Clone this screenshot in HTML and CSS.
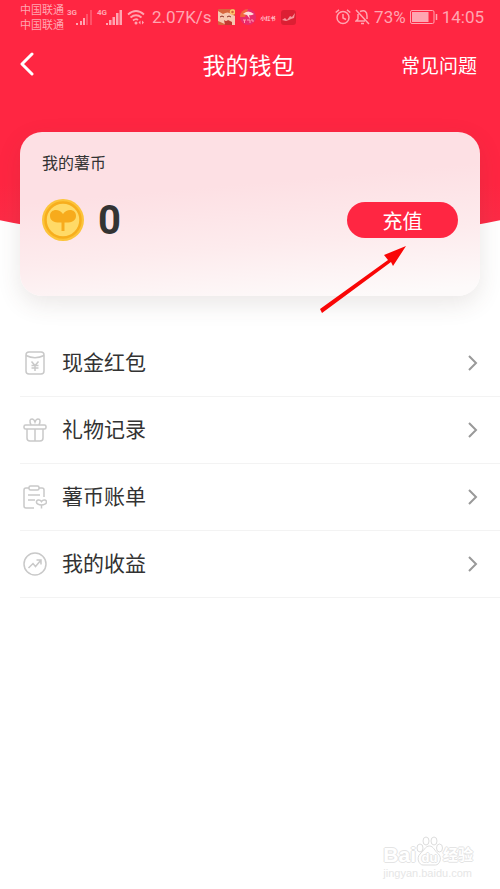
FILE: index.html
```html
<!DOCTYPE html>
<html lang="zh-CN">
<head>
<meta charset="utf-8">
<meta name="viewport" content="width=device-width, initial-scale=1">
<title>我的钱包</title>
<link rel="stylesheet" href="styles.css">
</head>
<body>
<div class="page">
  <header class="hero">
    <div class="status">
      <div class="carriers"><span>中国联通</span><span>中国联通</span></div>
      <div class="signal">
        <span class="net">3G</span>
        <svg width="16" height="16" viewBox="0 0 16 16" fill="currentColor">
          <path d="M0 14h2v2H0zM4 12h2v4H4zM7 9h2v7H7z"/>
          <path opacity=".35" d="M10 5h2v11h-2zM14 1h2v15h-2z"/>
        </svg>
      </div>
      <div class="signal">
        <span class="net">4G</span>
        <svg width="16" height="16" viewBox="0 0 16 16" fill="currentColor">
          <path d="M0 14h2v2H0zM3 11h2.500v5H3zM6.500 8H9v8H6.500zM10 4h2.500v12H10zM13.500 1H16v15h-2.500z"/>
        </svg>
      </div>
      <svg width="18" height="16" viewBox="0 0 18 16" fill="none" stroke="currentColor" stroke-width="1.800">
        <path d="M1 5.500Q9-1.500 17 5.500M3.500 8.500Q9 4 14.500 8.500M6 11.500Q9 9 11 11"/>
        <circle cx="9" cy="14" r="1.500" fill="currentColor" stroke="none"/>
        <path d="M13.500 11.500l-2 2 2 2zM15 11.500l2 2-2 2z" fill="currentColor" stroke="none"/>
      </svg>
      <span class="speed">2.07K/s</span>
      <div class="apps">
        <svg width="17" height="16" viewBox="0 0 17 16">
          <rect width="17" height="16" rx="1" fill="#d7653c"/>
          <path d="M0 2l5 3q5-3 8 0l4 2v9H9L0 12z" fill="#f7c8b0"/>
          <path d="M2 8q2-2 4 0M9 8q2-2 4 0" stroke="#8c3028" fill="none"/>
          <path d="M6 11q2 2 4 0l4 2v3H7z" fill="#c23a32"/>
          <circle cx="14.500" cy="3" r="2" fill="none" stroke="#ffc66e" stroke-width="1.500"/>
        </svg>
        <svg width="16" height="16" viewBox="0 0 16 16">
          <circle cx="8" cy="8" r="8" fill="#e92b6c"/>
          <path d="M0 8A8 8 0 0 1 8 0L5 8z" fill="#f1663c"/>
          <path d="M3 5q5-5 11 0-3 2-5 1l1 4-3-4z" fill="#ffdcd8"/>
          <path d="M3 11h3M4.500 11v3M7 11h3v3M11 11h2v2" stroke="#ff9fae" fill="none"/>
        </svg>
        <span class="redbook">小红书</span>
        <svg width="15" height="15" viewBox="0 0 15 15">
          <rect width="15" height="15" rx="3" fill="#dc1f33"/>
          <path d="M1 10l3-2 2 2 3-4 2 1 3-4-1 5-3 1-2 1-3 1z" fill="#f5959c"/>
        </svg>
      </div>
      <div class="device">
        <svg width="16" height="16" viewBox="0 0 16 16" fill="none" stroke="currentColor" stroke-width="1.500">
          <circle cx="8" cy="8.500" r="6"/><path d="M8 5v4l3 1.500M.700 3.500L4 .800M15.300 3.500L12 .800"/>
        </svg>
        <svg width="15" height="16" viewBox="0 0 15 16" fill="none" stroke="currentColor" stroke-width="1.500">
          <path d="M1 1l13 14M3 5v5l-2 2h9M5 2.500Q12 0 12 7v3M6 14.500h3"/>
        </svg>
        <span>73%</span>
        <svg width="28" height="14" viewBox="0 0 28 14" fill="none" stroke="currentColor">
          <rect x=".5" y=".5" width="23.500" height="13" rx="1.500"/>
          <rect x="2" y="2" width="16.500" height="10" fill="currentColor" stroke="none"/>
          <path d="M26.500 4v6" stroke-width="1.500"/>
        </svg>
        <span>14:05</span>
      </div>
    </div>
    <nav class="bar">
      <button class="back" aria-label="返回">
        <svg width="14" height="24" viewBox="0 0 14 24" fill="none" stroke="#fff" stroke-width="3" stroke-linecap="round" stroke-linejoin="round"><path d="M12 2L2 12l10 10"/></svg>
      </button>
      <h1>我的钱包</h1>
      <a class="faq" href="#faq">常见问题</a>
    </nav>
  </header>

  <main>
    <section class="card">
      <h2>我的薯币</h2>
      <div class="balance">
        <svg width="42" height="42" viewBox="0 0 42 42">
          <circle cx="21" cy="21" r="21" fill="#fcc43a"/>
          <circle cx="21" cy="21" r="17.500" fill="#ffda67" stroke="#f7ae1d" stroke-width="2.500"/>
          <path d="M21 15C17 9 8 10 8 17c0 5 5 7 11.500 6.500V32h3v-8.500C29 24 34 22 34 17c0-7-9-8-13-2z" fill="#f7ab1c"/>
        </svg>
        <strong>0</strong>
        <button class="topup">充值</button>
      </div>
      <svg class="pointer" width="88" height="68" viewBox="0 0 88 68" fill="#f90606">
        <path d="M2 67L0 63 68 14 64 9 86 0 73 20 71 16z"/>
      </svg>
    </section>

    <ul class="menu">
      <li><a href="#cash">
        <svg class="icon" viewBox="0 0 24 24"><rect x="3" y="1" width="18" height="22" rx="3"/><path d="M3 4.500Q12 9 21 4.500M8.500 10.500l3.500 4 3.500-4M12 14.500V20M8.500 14.500h7M8.500 17h7"/></svg>
        <span>现金红包</span>
        <svg class="chevron" viewBox="0 0 10 16"><path d="M1 1l7 7-7 7"/></svg>
      </a></li>
      <li><a href="#gifts">
        <svg class="icon" viewBox="0 0 24 24"><rect x="1" y="7" width="22" height="4" rx="1.500"/><path d="M4 11v9q0 3 3 3h10q3 0 3-3v-9M12 11v12M8 7Q5.500 1 9 1q2 0 3 3 1-3 3-3 3.500 0 1 6"/></svg>
        <span>礼物记录</span>
        <svg class="chevron" viewBox="0 0 10 16"><path d="M1 1l7 7-7 7"/></svg>
      </a></li>
      <li><a href="#bill">
        <svg class="icon" viewBox="0 0 24 24"><path d="M6 3H3Q1 3 1 5v16q0 2 2 2h8M16 3h3q2 0 2 2v7M5 10h12M5 15h7"/><rect x="6" y="1" width="10" height="4" rx="1.500"/><path d="M18.500 16.500C17 14 13 14.500 13.500 17.500q.5 2 5 2.500q4.500-.5 5-2.500c.5-3-3.500-3.500-5-1zM18.500 20v3.500"/></svg>
        <span>薯币账单</span>
        <svg class="chevron" viewBox="0 0 10 16"><path d="M1 1l7 7-7 7"/></svg>
      </a></li>
      <li><a href="#income">
        <svg class="icon" viewBox="0 0 24 24"><circle cx="12" cy="12" r="11"/><path d="M5.500 16l4.500-4.500 2.500 3L18 8M13.500 8H18v4.500"/></svg>
        <span>我的收益</span>
        <svg class="chevron" viewBox="0 0 10 16"><path d="M1 1l7 7-7 7"/></svg>
      </a></li>
    </ul>
  </main>

  <footer class="mark">
    <div class="brand">
      <span>Bai</span>
      <span class="paw">
        <svg width="27" height="30" viewBox="0 0 27 30" fill="#fff" stroke="#ddd">
          <ellipse cx="4" cy="12" rx="3" ry="4"/><ellipse cx="10" cy="5" rx="3" ry="4"/><ellipse cx="18" cy="5" rx="3" ry="4"/><ellipse cx="23.500" cy="12" rx="3" ry="4"/>
          <path d="M13.500 10c4 0 5 5 9 8 4 4 1 11-3 11H7c-4 0-7-7-3-11 4-3 5-8 9.500-8z"/>
        </svg>
        <span class="du">du</span>
      </span>
      <span class="exp">经验</span>
    </div>
    <div class="site">jingyan.baidu.com</div>
  </footer>
</div>
</body>
</html>
```
FILE: styles.css
```css
* { box-sizing: border-box; }

body {
  margin: 0;
  background: #fff;
  color: #333;
  font-family: Roboto, "Noto Sans CJK SC", sans-serif;
}

.page {
  position: relative;
  min-height: 100vh;
}

svg { display: block; flex: none; }
h1, h2, ul { margin: 0; padding: 0; font-weight: 400; }
a { color: inherit; text-decoration: none; }
button { border: 0; padding: 0; font: inherit; cursor: pointer; }

.hero {
  height: 245px;
  background: linear-gradient(#ff2642 75%, #fb2f49);
  clip-path: ellipse(114% 100% at 50% 0);
  color: #fff;
}

.status {
  display: flex;
  align-items: center;
  height: 34px;
  padding: 0 16px 0 20px;
  color: #ffa5b1;
  font-size: 17px;
}

.carriers {
  display: flex;
  flex-direction: column;
  margin-right: 3px;
  padding-top: 2px;
  font-size: 11px;
  line-height: 15px;
}

.signal {
  display: flex;
  align-items: center;
  margin-right: 5px;
}

.net {
  align-self: flex-start;
  width: 9px;
  font-size: 8px;
  font-weight: 700;
  line-height: 8px;
}

.speed { margin-left: 7px; }

.apps {
  display: flex;
  align-items: center;
  gap: 5px;
  margin-left: 6px;
}

.redbook { color: #ffd0d6; font-size: 5px; font-weight: 700; }

.device {
  display: flex;
  align-items: center;
  gap: 4px;
  margin-left: auto;
}

.bar {
  display: grid;
  grid-template-columns: 1fr auto 1fr;
  align-items: center;
  height: 60px;
  padding: 0 23px 0 20px;
}

.back { justify-self: start; background: none; }
.bar h1 { font-size: 23px; }
.faq { justify-self: end; font-size: 19px; }

.card {
  position: relative;
  height: 164px;
  margin: -113px 20px 34px;
  padding: 20px 22px;
  border-radius: 22px;
  background: linear-gradient(175deg, #fdfafa 5%, #fdebed 35%, #fde0e4 65%);
  background: linear-gradient(175deg, #fde0e4 35%, #fdebed 65%, #fdfafa 95%);
  box-shadow: 0 8px 24px rgba(80, 60, 50, .12);
}

.card h2 { font-size: 16px; line-height: 24px; }

.balance {
  display: flex;
  align-items: center;
  gap: 14px;
  margin-top: 22px;
}

.balance strong { padding-top: 2px; font-size: 40px; line-height: 42px; }

.topup {
  width: 111px;
  height: 36px;
  margin-left: auto;
  border-radius: 18px;
  background: #ff2642;
  color: #fff;
  font-size: 20px;
}

.pointer {
  position: absolute;
  right: 72px;
  bottom: -18px;
}

.menu { list-style: none; }

.menu li {
  margin-left: 20px;
  border-bottom: 1px solid #f3f3f3;
}

.menu a {
  display: flex;
  align-items: center;
  height: 66px;
  padding: 0 22px 0 3px;
  font-size: 21px;
  line-height: 28px;
}

.icon {
  width: 24px;
  height: 24px;
  margin-right: 15px;
  fill: none;
  stroke: #c9c9c9;
  stroke-width: 1.5;
}

.chevron {
  width: 10px;
  height: 16px;
  margin-left: auto;
  fill: none;
  stroke: #999;
  stroke-width: 2;
}

.mark {
  position: absolute;
  right: 27px;
  bottom: 8px;
  color: #fff;
  font-family: "Liberation Sans", "Noto Sans CJK SC", sans-serif;
  text-shadow: 1px 0 #e4e4e4, -1px 0 #e4e4e4, 0 1px #e4e4e4, 0 -1px #e4e4e4;
}

.brand {
  display: flex;
  align-items: flex-end;
  font-size: 21px;
  font-weight: 700;
  line-height: 22px;
}

.paw { position: relative; }

.du {
  position: absolute;
  inset: auto 0 0;
  font-size: 13px;
  line-height: 16px;
  text-align: center;
}

.exp { font-size: 15px; }

.site {
  color: #e6e6e6;
  font-size: 11px;
  line-height: 15px;
  text-shadow: none;
}
```
